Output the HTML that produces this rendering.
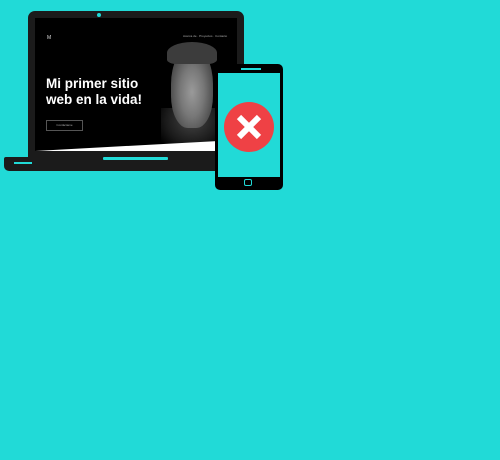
<!DOCTYPE html>
<html><head><style>
body{margin:0;width:500px;height:460px;background:#21dad7;position:relative;overflow:hidden;font-family:"Liberation Sans",sans-serif}
.a{position:absolute}
</style></head><body>
<div class="a" style="left:28px;top:11px;width:216px;height:150px;background:#1b1b1b;border-radius:7px 7px 0 0"></div>
<div class="a" style="left:97px;top:13px;width:4px;height:4px;border-radius:50%;background:#21dad7"></div>
<div class="a" style="left:35px;top:18px;width:202px;height:133px;background:#000;overflow:hidden">
  <div class="a" style="left:126px;top:90px;width:62px;height:40px;background:radial-gradient(ellipse at 50% 30%,#444 0,#1a1a1a 60%,#000 90%)"></div>
  <div class="a" style="left:136px;top:30px;width:42px;height:80px;border-radius:45% 45% 40% 40%;background:radial-gradient(ellipse at 50% 55%,#9a9a9a 0,#777 40%,#4a4a4a 75%,#222 100%)"></div>
  <div class="a" style="left:132px;top:24px;width:50px;height:22px;border-radius:50% 50% 20% 20%;background:#3c3c3c"></div>
  <div class="a" style="left:12px;top:17px;color:#ddd;font-size:5px">M</div>
  <div class="a" style="left:148px;top:16px;color:#aaa;font-size:3px;white-space:nowrap">Acerca de · Proyectos · Contacto</div>
  <div class="a" style="left:11px;top:58px;color:#fff;font-size:13.5px;font-weight:bold;line-height:16px">Mi primer sitio<br>web en la vida!</div>
  <div class="a" style="left:11px;top:102px;width:35px;height:9px;border:1px solid #555;color:#aaa;font-size:3px;line-height:9px;text-align:center">Contáctame</div>
  <svg class="a" style="left:0;top:0" width="202" height="133"><polygon points="0,133 202,122 202,133" fill="#fff"/></svg>
</div>
<div class="a" style="left:4px;top:157px;width:215px;height:14px;background:#1b1b1b;border-radius:2px 0 0 5px"></div>
<div class="a" style="left:14px;top:162px;width:18px;height:2px;background:#21dad7"></div>
<div class="a" style="left:103px;top:157px;width:65px;height:3px;background:#21dad7;border-radius:1px"></div>
<div class="a" style="left:215px;top:64px;width:68px;height:126px;background:#000;border-radius:5px"></div>
<div class="a" style="left:218px;top:73px;width:62px;height:104px;background:#21dad7"></div>
<div class="a" style="left:241px;top:68px;width:20px;height:2px;background:#21dad7"></div>
<div class="a" style="left:244px;top:179px;width:8px;height:7px;border:1.5px solid #21dad7;border-radius:2px;box-sizing:border-box"></div>
<svg class="a" style="left:224px;top:102px" width="50" height="50"><circle cx="25" cy="25" r="25" fill="#ef4145"/><path d="M15 15L35 35M35 15L15 35" stroke="#fff" stroke-width="6"/></svg>
</body></html>
